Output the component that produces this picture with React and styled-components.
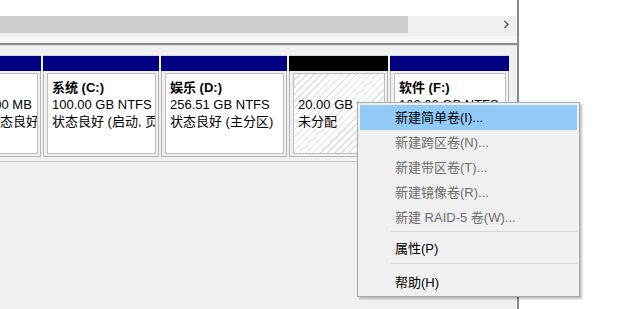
import styled, { createGlobalStyle } from "styled-components";

const GlobalStyle = createGlobalStyle`
  html, body {
    margin: 0;
    padding: 0;
    background: #ffffff;
  }
  body {
    font-family: "Liberation Sans", "Noto Sans CJK SC", sans-serif;
    font-size: 13px;
    color: #000;
  }
`;

const partitions = [
  { id: "rec", width: 63, title: "", size: "500 MB", status: "状态良好 (恢复分区)" },
  { id: "c", width: 116, title: "系统 (C:)", size: "100.00 GB NTFS", status: "状态良好 (启动, 页面文件, 故障转储, 基本数据分区)" },
  { id: "d", width: 126, title: "娱乐 (D:)", size: "256.51 GB NTFS", status: "状态良好 (主分区)" },
  { id: "u", width: 99, title: "", size: "20.00 GB", status: "未分配", free: true },
  { id: "f", width: 119, title: "软件 (F:)", size: "100.00 GB NTFS", status: "状态良好 (主分区)" },
];

const menuItems = [
  { label: "新建简单卷(I)...", active: true },
  { label: "新建跨区卷(N)...", disabled: true },
  { label: "新建带区卷(T)...", disabled: true },
  { label: "新建镜像卷(R)...", disabled: true },
  { label: "新建 RAID-5 卷(W)...", disabled: true },
  { sep: "top" },
  { label: "属性(P)" },
  { sep: "bottom" },
  { label: "帮助(H)" },
];

export default function App() {
  return (
    <>
      <GlobalStyle />
      <Screen>
        <Pane>
          <ListArea />
          <HScroll>
            <Thumb />
            <ScrollArrow>
              <svg width="7" height="9" viewBox="0 0 7 9">
                <path d="M1.5 1 L5 4.5 L1.5 8" fill="none" stroke="#606060" strokeWidth="1.6" />
              </svg>
            </ScrollArrow>
          </HScroll>
          <Splitter />
          <DiskStrip>
            {partitions.map((p) => (
              <Partition key={p.id} style={{ width: p.width }}>
                <PartHeader $free={p.free} />
                <PartBody>
                  <PartInner $free={p.free}>
                    <Line $bold>{p.title || "\u00a0"}</Line>
                    <Line>{p.size}</Line>
                    <Line>{p.status}</Line>
                  </PartInner>
                </PartBody>
              </Partition>
            ))}
          </DiskStrip>
          <Filler />
        </Pane>
        <Outside />
        <Menu>
          {menuItems.map((m, i) =>
            m.sep ? (
              <Separator key={i} $wide={m.sep === "bottom"} />
            ) : (
              <MenuItem key={i} $active={m.active} $disabled={m.disabled}>
                {m.label}
              </MenuItem>
            )
          )}
        </Menu>
      </Screen>
    </>
  );
}

const Screen = styled.div`
  position: relative;
  display: flex;
  width: 620px;
  height: 309px;
  overflow: hidden;
`;

const Pane = styled.div`
  display: flex;
  flex-direction: column;
  width: 517px;
  background: #f0f0f0;
  border-right: 2px solid #8c8c8c;
  overflow: hidden;
`;

const Outside = styled.div`
  flex: 1;
  background: #ffffff;
`;

const ListArea = styled.div`
  height: 16px;
  background: #ffffff;
`;

const HScroll = styled.div`
  display: flex;
  align-items: center;
  height: 17px;
  background: #f0f0f0;
`;

const Thumb = styled.div`
  width: 408px;
  height: 17px;
  background: #cdcdcd;
`;

const ScrollArrow = styled.div`
  display: flex;
  align-items: center;
  justify-content: center;
  margin-left: auto;
  margin-right: 2px;
  width: 17px;
  height: 17px;
`;

const Splitter = styled.div`
  height: 7px;
  margin-top: 3px;
  background: #f7f7f7;
  border-bottom: 2px solid #8a8a8a;
  box-shadow: 0 1px 0 #e0e0e0;
`;

const DiskStrip = styled.div`
  display: flex;
  gap: 2px;
  margin-left: -22px;
  padding-top: 10px;
  padding-bottom: 4px;
  border-bottom: 1px solid #c4c4c4;
`;

const Partition = styled.div`
  display: flex;
  flex-direction: column;
  flex-shrink: 0;
`;

const PartHeader = styled.div`
  height: 15px;
  background: ${(p) => (p.$free ? "#000000" : "#000080")};
  border-top: 1px solid #d8d8d8;
`;

const PartBody = styled.div`
  height: 81px;
  padding: 2px 2px 2px 3px;
  background: #f0f0f0;
  border: 1px solid #b4b4b4;
  border-top: none;
`;

const PartInner = styled.div`
  height: 100%;
  box-sizing: border-box;
  padding: 5px 0 0 4px;
  overflow: hidden;
  white-space: nowrap;
  border: 1px solid #bdbdbd;
  background: ${(p) =>
    p.$free
      ? "repeating-linear-gradient(135deg, #ffffff 0px, #ffffff 4px, #dedede 4px, #dedede 5px)"
      : "#ffffff"};
`;

const Line = styled.div`
  height: 17px;
  line-height: 17px;
  font-weight: ${(p) => (p.$bold ? 700 : 400)};
`;

const Filler = styled.div`
  flex: 1;
  background: #f0f0f0;
`;

const Menu = styled.div`
  position: absolute;
  left: 357px;
  top: 102px;
  width: 223px;
  box-sizing: border-box;
  padding: 2px 2px 1px;
  background: #f0f0f0;
  border: 1px solid #a8a8a8;
  box-shadow: 2px 2px 2px rgba(0, 0, 0, 0.25);
`;

const MenuItem = styled.div`
  height: 25px;
  line-height: 25px;
  padding-left: 35px;
  white-space: nowrap;
  color: ${(p) => (p.$disabled ? "#6d6d6d" : "#000000")};
  background: ${(p) => (p.$active ? "#91c9f7" : "transparent")};
`;

const Separator = styled.div`
  height: 1px;
  margin: ${(p) => (p.$wide ? "2px 0 6px 31px" : "1px 0 4px 31px")};
  background: #d7d7d7;
`;
